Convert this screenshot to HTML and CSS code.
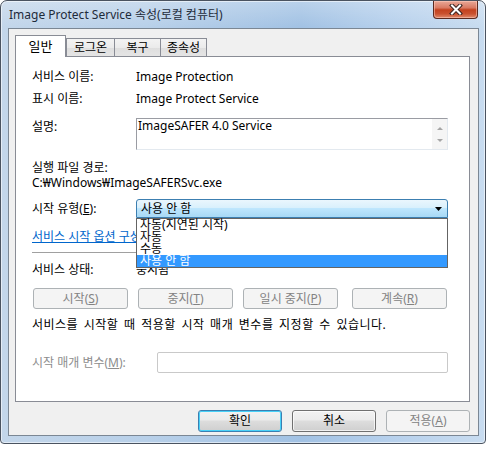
FILE: index.html
```html
<!DOCTYPE html>
<html lang="ko">
<head>
<meta charset="utf-8">
<title>Image Protect Service 속성</title>
<link rel="stylesheet" href="styles.css">
</head>
<body>
<div class="window">
  <div class="titlebar">
    <span class="title">Image Protect Service 속성(로컬 컴퓨터)</span>
    <div class="close">
      <svg width="14" height="11" viewBox="0 0 14 11">
        <path d="M3 1.5 L11 9.5 M11 1.5 L3 9.5" stroke="#3b2420" stroke-width="4" stroke-linecap="square" fill="none"/>
        <path d="M3 1.5 L11 9.5 M11 1.5 L3 9.5" stroke="#ffffff" stroke-width="2" stroke-linecap="square" fill="none"/>
      </svg>
    </div>
  </div>
  <div class="client">
    <div class="tabs">
      <div class="tab tab-active">일반</div>
      <div class="tab tab-w48">로그온</div>
      <div class="tab">복구</div>
      <div class="tab">종속성</div>
    </div>
    <div class="panel">
      <div class="row r1"><span class="lbl">서비스 이름:</span><span>Image Protection</span></div>
      <div class="row r2"><span class="lbl">표시 이름:</span><span>Image Protect Service</span></div>
      <div class="row r3">
        <span class="lbl lbl-desc">설명:</span>
        <div class="textbox">
          <span class="tb-text">ImageSAFER 4.0 Service</span>
          <div class="sb">
            <span class="sb-up"></span>
            <span class="sb-down"></span>
          </div>
        </div>
      </div>
      <div class="pathlabel">실행 파일 경로:</div>
      <div class="pathval">C:₩Windows₩ImageSAFERSvc.exe</div>
      <div class="row r-combo">
        <span class="lbl">시작 유형(<u>E</u>):</span>
        <div class="combo-wrap">
          <div class="combo">
            <span>사용 안 함</span>
            <svg class="arrow" width="7" height="4" viewBox="0 0 7 4"><path d="M0 0 H7 L3.5 4 Z" fill="#000"/></svg>
          </div>
          <div class="dropdown">
            <div class="item">자동(지연된 시작)</div>
            <div class="item">자동</div>
            <div class="item">수동</div>
            <div class="item item-sel">사용 안 함</div>
          </div>
        </div>
      </div>
      <div class="link">서비스 시작 옵션 구성</div>
      <div class="sep"></div>
      <div class="row r-status"><span class="lbl">서비스 상태:</span><span>중지됨</span></div>
      <div class="btnrow">
        <div class="btn btn-dis">시작(<u>S</u>)</div>
        <div class="btn btn-dis">중지(<u>T</u>)</div>
        <div class="btn btn-dis">일시 중지(<u>P</u>)</div>
        <div class="btn btn-dis btn-last">계속(<u>R</u>)</div>
      </div>
      <div class="hint">서비스를 시작할 때 적용할 시작 매개 변수를 지정할 수 있습니다.</div>
      <div class="row r-param">
        <span class="lbl lbl-param">시작 매개 변수(<u>M</u>):</span>
        <div class="param-input"></div>
      </div>
    </div>
    <div class="footer">
      <div class="fbtn fbtn-default">확인</div>
      <div class="fbtn">취소</div>
      <div class="fbtn fbtn-dis">적용(<u>A</u>)</div>
    </div>
  </div>
</div>
</body>
</html>
```
FILE: styles.css
```css
html, body {
  margin: 0;
  padding: 0;
  background: #ffffff;
}
body {
  width: 494px;
  height: 450px;
  overflow: hidden;
  font-family: "Noto Sans", "Noto Sans CJK KR", sans-serif;
  font-size: 12px;
  color: #000;
}
.window {
  width: 486px;
  height: 444px;
  box-sizing: border-box;
  border: 1px solid #4a5360;
  border-radius: 7px 7px 4px 4px;
  padding: 0 6px 7px 7px;
  display: flex;
  flex-direction: column;
  background:
    linear-gradient(180deg, rgba(255,255,255,0.25) 0px, rgba(255,255,255,0) 26px),
    linear-gradient(90deg, #c3d6ea 0%, #b8d0e9 30%, #a2c2e4 62%, #b6d0ec 80%, #c8dcf0 100%);
  box-shadow: inset 0 0 0 1px rgba(255,255,255,0.55);
}
.titlebar {
  height: 27px;
  flex: none;
  display: flex;
  justify-content: space-between;
  align-items: flex-start;
}
.title {
  padding-top: 6px;
  line-height: 16px;
  font-size: 12px;
  color: #1e2b3a;
  padding-left: 1px;
}
.close {
  width: 45px;
  height: 18px;
  margin-right: 1px;
  box-sizing: border-box;
  border: 1px solid #5b2a20;
  border-top: none;
  border-radius: 0 0 4px 4px;
  background: linear-gradient(180deg, #e9a897 0%, #d97a63 40%, #c3421f 52%, #c9512f 75%, #e08a6c 100%);
  display: flex;
  align-items: center;
  justify-content: center;
  box-shadow: inset 0 0 0 1px rgba(255,210,195,0.5);
}
.client {
  flex: 1;
  box-sizing: border-box;
  border: 1px solid #7b8794;
  background: #f0f0f0;
  padding: 6px 8px 0 6px;
  display: flex;
  flex-direction: column;
}
.tabs {
  display: flex;
  align-items: flex-end;
  height: 21px;
  position: relative;
  z-index: 2;
}
.tab {
  width: 47px;
  height: 18px;
  box-sizing: border-box;
  border: 1px solid #898c95;
  border-bottom: none;
  margin-left: -1px;
  background: linear-gradient(180deg, #f3f3f3 0%, #ebebeb 50%, #dedede 51%, #e5e5e5 100%);
  line-height: 17px;
  text-align: center;
  font-size: 12px;
}
.tab-w48 { width: 49px; }
.tab-active {
  width: 51px;
  height: 22px;
  margin-left: 0;
  margin-right: 1px;
  margin-bottom: -1px;
  background: #ffffff;
  line-height: 20px;
  font-size: 13px;
}
.panel {
  width: 455px;
  height: 346px;
  box-sizing: border-box;
  border: 1px solid #898c95;
  background: #ffffff;
  padding: 12px 21px 0 16px;
  position: relative;
  z-index: 1;
}
.row {
  display: flex;
  align-items: center;
  line-height: 16px;
}
.lbl {
  width: 104px;
  flex: none;
}
.r1 { height: 16px; }
.r2 { height: 16px; margin-top: 6px; }
.r3 { margin-top: 11px; align-items: flex-start; }
.lbl-desc { margin-top: 1px; }
.textbox {
  flex: 1;
  height: 32px;
  box-sizing: border-box;
  border: 1px solid #9a9ca3;
  border-right-color: #e3e9ef;
  border-bottom-color: #e3e9ef;
  display: flex;
  justify-content: space-between;
}
.tb-text {
  padding-left: 1px;
  line-height: 14px;
}
.sb {
  width: 15px;
  background: #f5f5f5;
  display: flex;
  flex-direction: column;
  align-items: center;
  justify-content: space-around;
  padding: 3px 0 2px;
}
.sb-up, .sb-down {
  width: 0;
  height: 0;
  border-left: 3px solid transparent;
  border-right: 3px solid transparent;
}
.sb-up { border-bottom: 3px solid #a6a6a6; }
.sb-down { border-top: 3px solid #a6a6a6; }
.pathlabel {
  margin-top: 10px;
  line-height: 15px;
}
.pathval {
  line-height: 16px;
}
.r-combo {
  margin-top: 8px;
  height: 19px;
}
.combo-wrap {
  flex: 1;
  position: relative;
  height: 19px;
}
.combo {
  height: 19px;
  box-sizing: border-box;
  border: 1px solid #3c7fb1;
  border-radius: 3px 3px 0 0;
  background: linear-gradient(180deg, #eaf6fd 0%, #d9f0fc 45%, #bee6fd 50%, #a7d9f5 100%);
  display: flex;
  align-items: center;
  justify-content: space-between;
  padding: 0 5px 0 4px;
  font-size: 12px;
}
.dropdown {
  position: absolute;
  top: 19px;
  left: 0;
  right: 0;
  background: #fff;
  border: 1px solid #646464;
  z-index: 5;
}
.item {
  height: 12px;
  line-height: 12px;
  padding-left: 3px;
  font-size: 12px;
}
.item-sel {
  background: #3399ff;
  color: #fff;
}
.link {
  margin-top: 11px;
  line-height: 16px;
  color: #0066cc;
  text-decoration: underline;
}
.sep {
  margin-top: 7px;
  height: 1px;
  background: #a0a0a0;
}
.r-status {
  margin-top: 9px;
  height: 16px;
}
.btnrow {
  margin-top: 10px;
  display: flex;
  padding-left: 1px;
}
.btn {
  width: 95px;
  height: 21px;
  box-sizing: border-box;
  margin-right: 10px;
  border: 1px solid #adb2b5;
  border-radius: 3px;
  background: #f4f4f4;
  color: #838383;
  text-align: center;
  line-height: 19px;
}
.btn-last { margin-left: 4px; margin-right: 0; }
.hint {
  margin-top: 8px;
  line-height: 16px;
  word-spacing: 2px;
  letter-spacing: 0.5px;
}
.r-param {
  margin-top: 19px;
  height: 21px;
}
.lbl-param {
  width: 125px;
  color: #8d8d8d;
}
.param-input {
  flex: 1;
  height: 21px;
  box-sizing: border-box;
  border: 1px solid #c9c9c9;
  border-radius: 2px;
  background: #fff;
}
.footer {
  margin-top: 8px;
  display: flex;
  justify-content: flex-end;
}
.fbtn {
  width: 84px;
  height: 22px;
  box-sizing: border-box;
  margin-left: 10px;
  border: 1px solid #707070;
  border-radius: 3px;
  background: linear-gradient(180deg, #f2f2f2 0%, #ebebeb 45%, #dddddd 50%, #cfcfcf 100%);
  box-shadow: inset 0 0 0 1px rgba(255,255,255,0.7);
  text-align: center;
  line-height: 20px;
}
.fbtn-default {
  border-color: #3c7fb1;
  box-shadow: inset 0 0 0 1px #48d1f8;
}
.fbtn-dis {
  border-color: #adb2b5;
  background: #f4f4f4;
  box-shadow: none;
  color: #838383;
}
u {
  text-decoration: underline;
}
```
